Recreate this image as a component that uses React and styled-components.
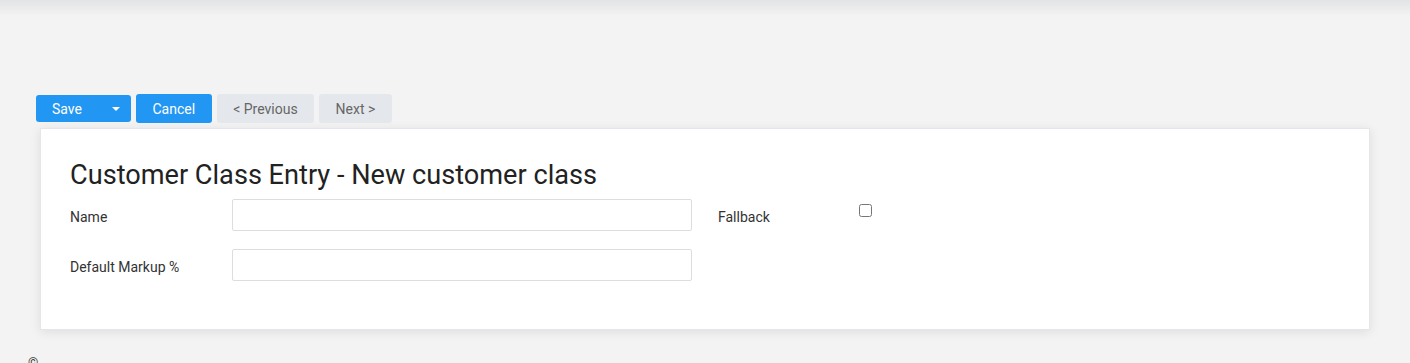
import styled, { createGlobalStyle } from "styled-components";

const GlobalStyle = createGlobalStyle`
  html, body {
    margin: 0;
    padding: 0;
    background: #f3f3f3;
    font-family: Roboto, "Liberation Sans", sans-serif;
    color: #333;
  }
  body {
    overflow: hidden;
  }
`;

const Page = styled.div`
  min-height: 363px;
`;

const TopShade = styled.div`
  height: 16px;
  background: linear-gradient(to bottom, #e2e3e5, #f3f3f3);
`;

const Content = styled.div`
  padding: 78px 40px 0 36px;
`;

const Toolbar = styled.div`
  display: flex;
  align-items: center;
  gap: 5px;
  height: 29px;
`;

const Group = styled.div`
  display: flex;
  height: 27px;
`;

const Button = styled.button`
  height: ${(p) => (p.$tall ? "29px" : "27px")};
  border: none;
  border-radius: 3px;
  padding: 0 16.5px;
  font-family: inherit;
  font-size: 14px;
  cursor: pointer;
  background: ${(p) => (p.$primary ? "#2196f3" : "#e4e8ec")};
  color: ${(p) => (p.$primary ? "#fff" : "#666")};
  display: flex;
  align-items: center;
`;

const SaveMain = styled(Button)`
  border-radius: 3px 0 0 3px;
  width: 62px;
  padding: 0 16px;
`;

const SaveToggle = styled(Button)`
  border-radius: 0 3px 3px 0;
  width: 33px;
  justify-content: center;
  padding: 0 0 0 2px;
`;

const Caret = styled.span`
  width: 0;
  height: 0;
  border-left: 4.5px solid transparent;
  border-right: 4.5px solid transparent;
  border-top: 4px solid #fff;
`;

const Card = styled.div`
  margin: 5px 0 0 4px;
  background: #fff;
  border: 1px solid #e3e7ec;
  box-shadow: 0 2px 10px rgba(0, 0, 0, 0.09);
  padding: 28px 29px 48px;
`;

const Title = styled.h1`
  margin: 0 0 6px;
  font-size: 27.15px;
  font-weight: 400;
  color: #222;
  line-height: 36px;
`;

const Form = styled.div`
  display: grid;
  grid-template-columns: 162px 460px 26px 141px auto;
  row-gap: 18px;
  align-items: center;
`;

const Label = styled.label`
  font-size: 14px;
  color: #333;
  padding-top: 4px;
`;

const Input = styled.input`
  box-sizing: border-box;
  height: 32px;
  width: 460px;
  border: 1px solid #ddd;
  border-radius: 2px;
  font-family: inherit;
  font-size: 14px;
  padding: 0 8px;
  outline: none;
`;

const Spacer = styled.div``;

const Check = styled.input`
  margin: 0;
  width: 13px;
  height: 13px;
  align-self: start;
  margin-top: 5px;
`;

const Footer = styled.div`
  margin-top: 25px;
  padding-left: 28px;
  font-size: 13px;
  color: #333;
  line-height: 16px;
`;

export default function App() {
  return (
    <>
      <GlobalStyle />
      <Page>
        <TopShade />
        <Content>
          <Toolbar>
            <Group>
              <SaveMain $primary>Save</SaveMain>
              <SaveToggle $primary>
                <Caret />
              </SaveToggle>
            </Group>
            <Button $primary $tall>Cancel</Button>
            <Button $tall>&lt; Previous</Button>
            <Button $tall>Next &gt;</Button>
          </Toolbar>
          <Card>
            <Title>Customer Class Entry - New customer class</Title>
            <Form>
              <Label>Name</Label>
              <Input type="text" />
              <Spacer />
              <Label>Fallback</Label>
              <Check type="checkbox" />
              <Label>Default Markup %</Label>
              <Input type="text" />
            </Form>
          </Card>
        </Content>
        <Footer>©</Footer>
      </Page>
    </>
  );
}
